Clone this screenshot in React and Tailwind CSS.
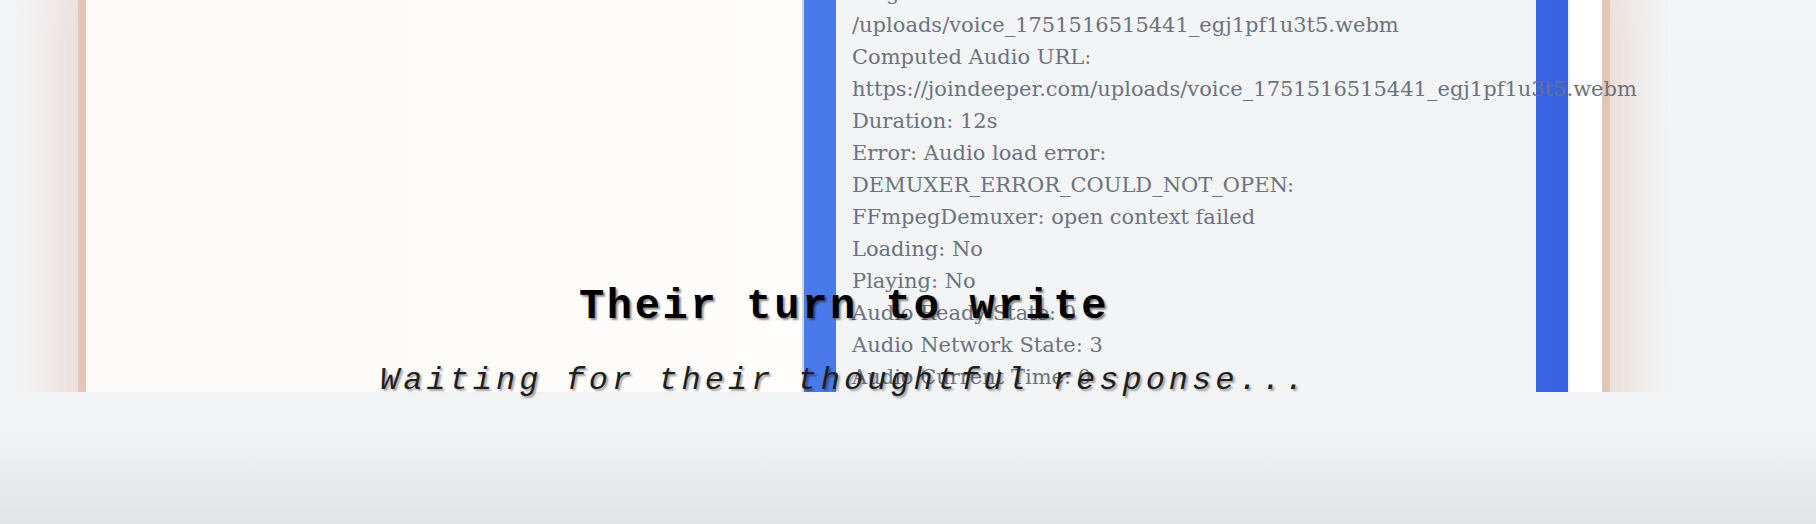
import React from 'react';

const debugLines = [
  'Original Audio URL:',
  '/uploads/voice_1751516515441_egj1pf1u3t5.webm',
  'Computed Audio URL:',
  'https://joindeeper.com/uploads/voice_1751516515441_egj1pf1u3t5.webm',
  'Duration: 12s',
  'Error: Audio load error:',
  'DEMUXER_ERROR_COULD_NOT_OPEN:',
  'FFmpegDemuxer: open context failed',
  'Loading: No',
  'Playing: No',
  'Audio Ready State: 0',
  'Audio Network State: 3',
  'Audio Current Time: 0',
  'Audio Duration: NaN',
];

function DebugPanel() {
  return (
    <div className="w-[768px] border-2 border-l-[#d4d8de] border-r-[#eef0f3] border-y-transparent bg-gradient-to-r from-[#4a7aea] to-[#3762e1] px-8">
      <div className="h-full bg-[#f3f4f6] pl-4 font-['DejaVu_Serif',serif] text-[21px] leading-8 text-[#6b7280]">
        {debugLines.map((line, i) => (
          <div key={i} className="whitespace-nowrap">{line}</div>
        ))}
      </div>
    </div>
  );
}

export default function App() {
  return (
    <div className="relative h-[524px] w-full overflow-hidden bg-[linear-gradient(to_bottom,#f4f5f7_0%,#f2f3f5_82%,#e2e3e5_100%)]">
      <div className="ml-4 h-[392px] w-[1652px] overflow-hidden bg-[#f3f4f6]">
        <div className="-mt-[25px] ml-[62px] flex h-[480px] w-[1532px] justify-end border-x-8 border-[#e2c6b8] bg-gradient-to-r from-[#fdfbf9] to-white pr-8 shadow-[0_0_60px_8px_rgba(222,186,168,0.6)]">
          <DebugPanel />
        </div>
      </div>

      {/* waiting overlay sits above the panel */}
      <div className="absolute left-[78px] top-[286px] flex w-[1532px] flex-col items-center gap-[37px] font-['Liberation_Mono',monospace]">
        <h2 className="text-[42px] font-bold leading-[42px] tracking-[2.7px] text-black [text-shadow:2px_2px_2px_rgba(0,0,0,0.45)]">
          Their turn to write
        </h2>
        <p className="text-[32px] italic leading-[32px] tracking-[4px] text-[#1f1f1f] [text-shadow:2px_2px_2px_rgba(0,0,0,0.35)]">
          Waiting for their thoughtful response...
        </p>
      </div>
    </div>
  );
}
